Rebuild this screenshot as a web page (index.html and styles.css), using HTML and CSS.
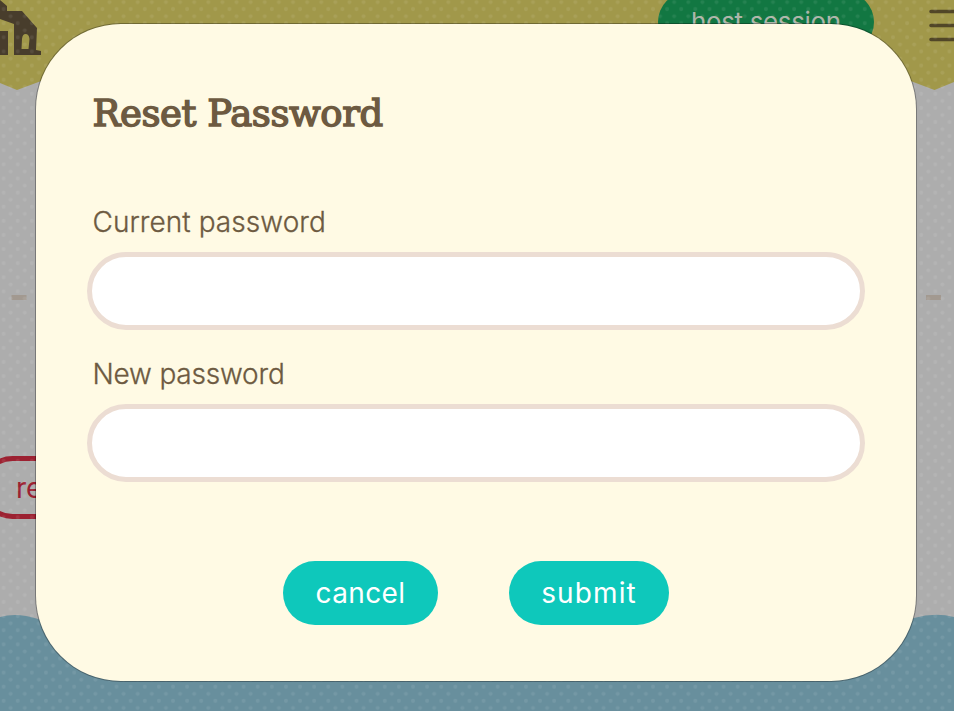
FILE: index.html
```html
<!DOCTYPE html>
<html lang="en">
<head>
<meta charset="utf-8">
<title>Reset Password</title>
<link rel="stylesheet" href="styles.css">
</head>
<body>
<svg class="backdrop" width="954" height="711" viewBox="0 0 954 711" aria-hidden="true">
  <defs>
    <pattern id="dots" x="3.6" y="-5" width="14.117" height="14.117" patternUnits="userSpaceOnUse">
      <circle cx="7.06" cy="7.06" r="2" /><circle cx="0" cy="0" r="2" /><circle cx="14.117" cy="0" r="2" /><circle cx="0" cy="14.117" r="2" /><circle cx="14.117" cy="14.117" r="2" />
    </pattern>
  </defs>
  <rect class="wall" width="954" height="711" />
  <path class="awning" d="M0 0H954V82L934.500 90L900 77H52L17 90L0 83Z" />
  <path class="sea" d="M0 617Q17 612 38 619L60 630H890L914 618Q935 612 954 617V711H0Z" />
  <path class="barn" fill-rule="evenodd" d="M0 0L7 6V11H22L37 28L36 50L41 51V55H14V24L0 19ZM21.500 49H28.500L29.500 39Q29 34 25.500 34Q22.500 34 22 39ZM0 31H8V55H0Z" />
  <path class="burger" d="M931 11.500H960M931 25.500H960M931 39.500H960" />
  <rect class="host" x="658" y="-8" width="216" height="60" rx="30" />
  <rect class="dash" x="11.500" y="295" width="15" height="5" />
  <rect class="dash" x="926" y="295" width="15" height="5" />
  <rect class="remove" x="-16.500" y="458.500" width="160" height="58" rx="29" />
  <text class="host-text" x="691" y="31" textLength="150">host session</text>
  <text class="remove-text" x="16" y="498">remove</text>
  <rect class="texture" width="954" height="711" fill="url(#dots)" />
</svg>
<form class="dialog">
  <h1><span>Reset Password</span></h1>
  <label class="field"><span>Current password</span><input type="password"></label>
  <label class="field"><span class="new">New password</span><input type="password"></label>
  <div class="actions">
    <button type="button" class="cancel">cancel</button>
    <button type="button" class="submit">submit</button>
  </div>
</form>
</body>
</html>
```
FILE: styles.css
```css
* { box-sizing: border-box; }
body {
  margin: 0;
  height: 711px;
  padding: 24px 38px 0 36px;
  overflow: hidden;
  background: #adadad;
  font-family: Inter, "Liberation Sans", sans-serif;
}
.backdrop { position: absolute; inset: 0; }
.wall { fill: #adadad; }
.awning { fill: #a1984a; }
.sea { fill: #688f9d; }
.barn { fill: #483d2c; }
.burger { stroke: #514627; stroke-width: 3.6; stroke-linecap: round; }
.host { fill: #127742; }
.dash { fill: #a29990; }
.remove { fill: none; stroke: #9c2131; stroke-width: 5; }
.host-text { fill: #adb5a9; font-size: 26px; }
.remove-text { fill: #9c2131; font-size: 28px; }
.texture { opacity: .08; }
#dots circle { fill: #fff; }
.dialog {
  position: relative;
  width: 880px;
  height: 657px;
  padding: 58px 51px 0;
  border-radius: 85px;
  background: #fffae4;
  box-shadow: 0 0 0 1px rgba(0, 0, 0, .3);
}
h1 {
  margin: 0 0 60px 5.5px;
  height: 64px;
  color: #6d5a41;
  font: 400 37px/64px "DejaVu Serif", serif;
  letter-spacing: -.4px;
  -webkit-text-stroke: 1.5px #6d5a41;
  white-space: nowrap;
}
.field { display: block; height: 152px; }
.field span {
  display: block;
  height: 46px;
  padding-left: 5.5px;
  color: #6d5a41;
  font-size: 28px;
  font-weight: 300;
  line-height: 32px;
  letter-spacing: .05px;
  -webkit-text-stroke: .3px #6d5a41;
}
.field .new { letter-spacing: -.2px; }
.field input {
  display: block;
  width: 778px;
  height: 78px;
  padding: 0 30px;
  border: 5px solid #ecddd3;
  border-radius: 39px;
  background: #fff;
  outline: none;
  font-size: 28px;
}
.actions { display: flex; justify-content: center; gap: 71px; margin-top: 51px; }
button {
  height: 64px;
  padding: 0;
  border: 0;
  border-radius: 32px;
  background: #0ec8bb;
  color: #fff;
  font: 400 28px/64px Inter, "Liberation Sans", sans-serif;
}
.cancel { width: 155px; letter-spacing: .4px; }
.submit { width: 160px; letter-spacing: 1.1px; }
```
